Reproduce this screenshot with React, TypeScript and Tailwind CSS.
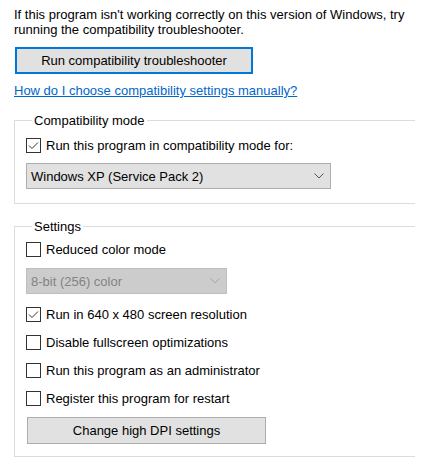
import React from "react";

function Check({ checked, label }: { checked?: boolean; label: string }) {
  return (
    <div className="flex items-center h-[15px]">
      <div className="w-[15px] h-[15px] border border-[#333333] bg-white flex items-center justify-center shrink-0">
        {checked && (
          <svg width="13" height="13" viewBox="0 0 13 13">
            <polyline
              points="2,6.5 5,9.5 11,3.5"
              fill="none"
              stroke="#333333"
              strokeWidth="1"
            />
          </svg>
        )}
      </div>
      <span className="ml-[5px] whitespace-nowrap">{label}</span>
    </div>
  );
}

function Chevron({ color }: { color: string }) {
  return (
    <svg width="10" height="6" viewBox="0 0 10 6">
      <polyline points="0.5,0.5 5,5 9.5,0.5" fill="none" stroke={color} strokeWidth="1" />
    </svg>
  );
}

export default function App() {
  return (
    <div
      className="w-[422px] h-[463px] bg-white text-black text-[13px] leading-[15px] pl-[14px] pt-[7px] overflow-hidden"
      style={{ fontFamily: '"Liberation Sans", Arial, sans-serif' }}
    >
      <p className="whitespace-nowrap">
        If this program isn't working correctly on this version of Windows, try
        <br />
        running the compatibility troubleshooter.
      </p>

      <button className="block mt-[10px] ml-[1px] w-[238px] h-[27px] border-2 border-[#0078d7] bg-[#e1e1e1] text-center">
        Run compatibility troubleshooter
      </button>

      <div className="mt-[9px]">
        <a className="text-[#0066cc] underline whitespace-nowrap" href="#">
          How do I choose compatibility settings manually?
        </a>
      </div>

      <fieldset className="mt-[15px] w-[401px] border-t border-l border-b border-[#dcdcdc] pl-[11px] pb-[14px]">
        <legend className="ml-[6px] px-[2px]">Compatibility mode</legend>
        <div className="mt-[10px]">
          <Check checked label="Run this program in compatibility mode for:" />
        </div>
        <div className="mt-[10px] w-[305px] h-[26px] border border-[#adadad] bg-[#e1e1e1] flex items-center justify-between pl-[4px] pr-[6px]">
          <span>Windows XP (Service Pack 2)</span>
          <Chevron color="#555555" />
        </div>
      </fieldset>

      <fieldset className="mt-[15px] w-[401px] border-t border-l border-b border-[#dcdcdc] pl-[11px] pb-[12px]">
        <legend className="ml-[6px] px-[2px]">Settings</legend>
        <div className="mt-[8px]">
          <Check label="Reduced color mode" />
        </div>
        <div className="mt-[11px] w-[201px] h-[26px] border border-[#bfbfbf] bg-[#cccccc] text-[#838383] flex items-center justify-between pl-[4px] pr-[6px]">
          <span>8-bit (256) color</span>
          <Chevron color="#a6a6a6" />
        </div>
        <div className="mt-[13px]">
          <Check checked label="Run in 640 x 480 screen resolution" />
        </div>
        <div className="mt-[13px]">
          <Check label="Disable fullscreen optimizations" />
        </div>
        <div className="mt-[13px]">
          <Check label="Run this program as an administrator" />
        </div>
        <div className="mt-[13px]">
          <Check label="Register this program for restart" />
        </div>
        <button className="block mt-[11px] ml-[1px] w-[239px] h-[27px] border border-[#adadad] bg-[#e1e1e1] text-center">
          Change high DPI settings
        </button>
      </fieldset>
    </div>
  );
}
